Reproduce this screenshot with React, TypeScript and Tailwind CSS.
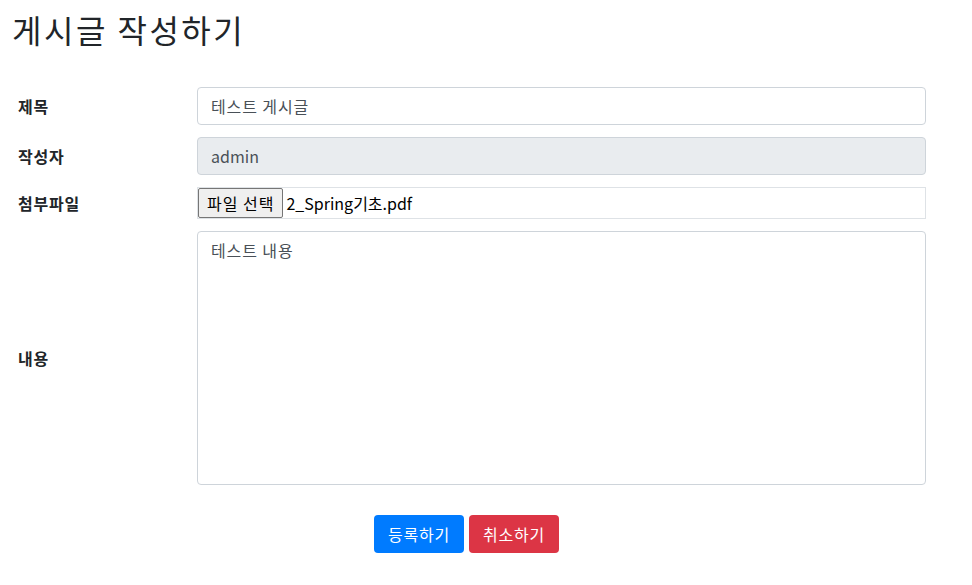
const font = {fontFamily: '"Noto Sans CJK KR", "Noto Sans", sans-serif'};

const Row = ({label, children, className}: {label: string; children: React.ReactNode; className?: string}) => (
  <div className={'flex items-center ' + (className ?? '')}>
    <label className="w-[197px] shrink-0 pl-[18px] text-[16px] font-bold tracking-[0.8px] text-[#212529]">{label}</label>
    <div className="w-[729px]">{children}</div>
  </div>
);

const App = () => {
  return (
    <div style={font} className="min-h-[585px] w-[972px] bg-white text-[#212529]">
      <h2 className="pl-[12px] pt-[10px] text-[32px] leading-[38px] font-normal tracking-[2.5px]">게시글 작성하기</h2>
      <form className="mt-[39px] flex flex-col gap-[12px]">
        <Row label="제목">
          <input
            defaultValue="테스트 게시글"
            className="h-[38px] w-full rounded-[4px] border border-[#ced4da] px-[13px] text-[16px] tracking-[0.9px] text-[#495057] outline-none"
          />
        </Row>
        <Row label="작성자">
          <input
            defaultValue="admin"
            readOnly
            className="h-[38px] w-full rounded-[4px] border border-[#ced4da] bg-[#e9ecef] px-[13px] text-[16px] text-[#495057] outline-none"
          />
        </Row>
        <Row label="첨부파일">
          <div className="flex h-[32px] w-full items-center border border-[#dee2e6] bg-white">
            <span className="flex h-[30px] items-center rounded-[2px] border border-[#767676] bg-[#efefef] px-[8px] text-[16px] tracking-[1px] text-black">
              파일 선택
            </span>
            <span className="pl-[3px] text-[16px] text-black">2_Spring기초.pdf</span>
          </div>
        </Row>
        <Row label="내용">
          <textarea
            defaultValue="테스트 내용"
            className="block h-[254px] w-full resize-none rounded-[4px] border border-[#ced4da] px-[13px] py-[6px] text-[16px] tracking-[0.9px] text-[#495057] outline-none"
          />
        </Row>
      </form>
      <div className="mt-[30px] flex gap-[5px] pl-[374px]">
        <button className="h-[38px] w-[90px] rounded-[4px] bg-[#007bff] text-[16px] tracking-[0.8px] text-white">등록하기</button>
        <button className="h-[38px] w-[90px] rounded-[4px] bg-[#dc3545] text-[16px] tracking-[0.8px] text-white">취소하기</button>
      </div>
    </div>
  );
};

export default App;
